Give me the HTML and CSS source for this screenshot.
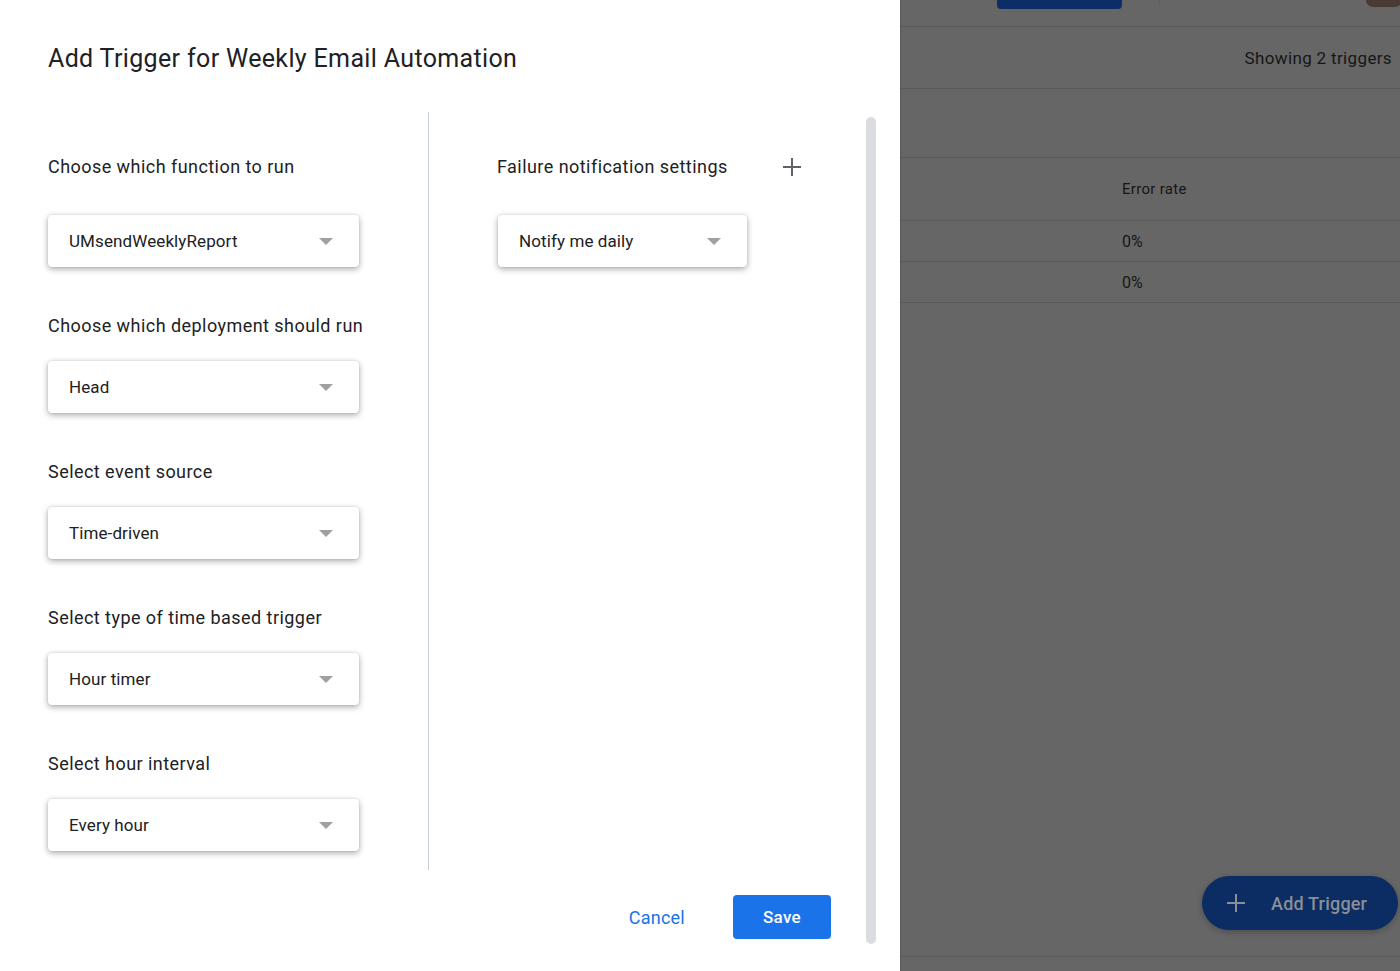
FILE: index.html
```html
<!DOCTYPE html>
<html>
<head>
<meta charset="utf-8">
<link rel="stylesheet" href="styles.css">
</head>
<body>
<div class="screen">
  <div class="dialog">
    <div class="main">
      <h1 class="title">Add Trigger for Weekly Email Automation</h1>
      <div class="columns">
        <div class="col-left">
          <div class="group first">
            <div class="label">Choose which function to run</div>
            <div class="select"><span>UMsendWeeklyReport</span><i class="arrow"></i></div>
          </div>
          <div class="group">
            <div class="label">Choose which deployment should run</div>
            <div class="select"><span>Head</span><i class="arrow"></i></div>
          </div>
          <div class="group">
            <div class="label">Select event source</div>
            <div class="select"><span>Time-driven</span><i class="arrow"></i></div>
          </div>
          <div class="group">
            <div class="label">Select type of time based trigger</div>
            <div class="select"><span>Hour timer</span><i class="arrow"></i></div>
          </div>
          <div class="group">
            <div class="label">Select hour interval</div>
            <div class="select"><span>Every hour</span><i class="arrow"></i></div>
          </div>
        </div>
        <div class="divider"></div>
        <div class="col-right">
          <div class="group first">
            <div class="label-row">
              <div class="label">Failure notification settings</div>
              <svg class="plus" width="20" height="20" viewBox="0 0 20 20"><path d="M10 1v18M1 10h18" stroke="#5f6368" stroke-width="2" fill="none"/></svg>
            </div>
            <div class="select narrow"><span>Notify me daily</span><i class="arrow"></i></div>
          </div>
        </div>
      </div>
      <div class="actions">
        <button class="btn-text">Cancel</button>
        <button class="btn-primary">Save</button>
      </div>
    </div>
    <div class="scrollbar"></div>
  </div>
  <div class="backdrop">
    <div class="topbar">
      <div class="top-btn"></div>
      <div class="top-sep"></div>
      <div class="avatar"></div>
    </div>
    <div class="bg-row showing"><span>Showing 2 triggers</span></div>
    <div class="bg-row blank"></div>
    <div class="bg-row head"><span class="cell">Error rate</span></div>
    <div class="bg-row data"><span class="cell">0%</span></div>
    <div class="bg-row data"><span class="cell">0%</span></div>
    <div class="bg-fill">
      <div class="fab">
        <svg width="20" height="20" viewBox="0 0 20 20"><path d="M10 1v18M1 10h18" stroke="#8a8e96" stroke-width="2" fill="none"/></svg>
        <span>Add Trigger</span>
      </div>
    </div>
    <div class="bg-bottom"></div>
  </div>
</div>
</body>
</html>
```
FILE: styles.css
```css
* { box-sizing: border-box; }
html, body { margin: 0; padding: 0; }
body {
  font-family: Roboto, "Liberation Sans", Arial, sans-serif;
  color: #202124;
  width: 1400px;
  height: 971px;
  overflow: hidden;
}
.screen {
  display: flex;
  width: 1400px;
  height: 971px;
}
.dialog {
  width: 900px;
  height: 971px;
  background: #fff;
  display: flex;
  flex-shrink: 0;
}
.main {
  flex: 1;
  display: flex;
  flex-direction: column;
  padding-left: 48px;
  padding-right: 35px;
}
.title {
  margin: 0;
  padding-top: 43px;
  height: 112px;
  font-size: 25px;
  line-height: 32px;
  font-weight: 400;
  letter-spacing: 0.35px;
  color: #202124;
}
.columns {
  display: flex;
  height: 758px;
}
.col-left {
  width: 380px;
  padding-top: 43px;
  display: flex;
  flex-direction: column;
  gap: 47px;
}
.divider {
  width: 1px;
  height: 758px;
  background: #c6d0d8;
}
.col-right {
  padding-left: 68px;
  padding-top: 43px;
}
.group {
  display: flex;
  flex-direction: column;
}
.label {
  font-size: 18px;
  line-height: 24px;
  letter-spacing: 0.45px;
  color: #202124;
  margin-bottom: 23px;
}
.group.first .label { margin-bottom: 36px; }
.group.first .select { margin-top: 0; }
.label-row {
  display: flex;
  justify-content: space-between;
  width: 305px;
}
.plus { margin-top: 2px; }
.select {
  width: 311px;
  height: 52px;
  border-radius: 4px;
  background: #fff;
  box-shadow: 0 2px 6px rgba(0,0,0,0.34), 0 0 2px rgba(0,0,0,0.12);
  display: flex;
  align-items: center;
  justify-content: space-between;
  padding-left: 21px;
  padding-right: 26px;
  font-size: 17px;
  letter-spacing: 0.1px;
  color: #202124;
}
.select.narrow { width: 249px; margin-left: 1px; }
.arrow {
  width: 0;
  height: 0;
  border-left: 7px solid transparent;
  border-right: 7px solid transparent;
  border-top: 7px solid #a0a0a0;
}
.actions {
  display: flex;
  justify-content: flex-end;
  align-items: center;
  margin-top: 25px;
  gap: 36px;
}
.btn-text {
  background: none;
  border: none;
  font-family: inherit;
  font-size: 18px;
  color: #1a73e8;
  padding: 0 12px;
  height: 44px;
  letter-spacing: 0.25px;
}
.btn-primary {
  background: #1a73e8;
  border: none;
  border-radius: 4px;
  width: 98px;
  height: 44px;
  color: #fff;
  font-family: inherit;
  font-size: 17px;
  font-weight: 500;
  letter-spacing: 0.3px;
}
.scrollbar {
  width: 10px;
  margin-top: 117px;
  height: 827px;
  border-radius: 5px;
  background: #dadce0;
  margin-right: 24px;
}
.backdrop {
  flex: 1;
  background: #666666;
  display: flex;
  flex-direction: column;
  border-left: 1px solid #5a5a5a;
  color: #161616;
}
.topbar {
  height: 27px;
  border-bottom: 1px solid #5a5a5a;
  display: flex;
  align-items: flex-start;
  padding-left: 96px;
}
.top-btn {
  width: 125px;
  height: 9px;
  background: #0b2e66;
  border-radius: 0 0 4px 4px;
}
.top-sep {
  width: 1px;
  height: 5px;
  background: #5e5e5e;
  margin-left: 37px;
}
.avatar {
  margin-left: auto;
  width: 36px;
  height: 7px;
  border-radius: 0 0 18px 18px;
  background: #4a3a34;
  margin-right: -2px;
}
.bg-row {
  display: flex;
  align-items: center;
  border-bottom: 1px solid #5a5a5a;
}
.showing {
  height: 62px;
  justify-content: flex-end;
  padding-right: 8px;
  font-size: 17px;
  letter-spacing: 0.35px;
}
.blank { height: 69px; }
.head { height: 63px; font-size: 15px; letter-spacing: 0.3px; }
.data { height: 41px; font-size: 16px; }
.cell { margin-left: 221px; }
.bg-fill {
  flex: 1;
  display: flex;
  justify-content: flex-end;
  align-items: flex-end;
  padding-bottom: 26px;
  padding-right: 2px;
}
.fab {
  width: 196px;
  height: 54px;
  border-radius: 27px;
  background: #0b2d63;
  box-shadow: 0 2px 6px rgba(0,0,0,0.25);
  display: flex;
  align-items: center;
  padding-left: 24px;
  gap: 25px;
  color: #8a8e96;
  font-size: 18px;
  font-weight: 500;
  letter-spacing: 0.2px;
}
.bg-bottom {
  height: 15px;
  border-top: 1px solid #5a5a5a;
}
```
